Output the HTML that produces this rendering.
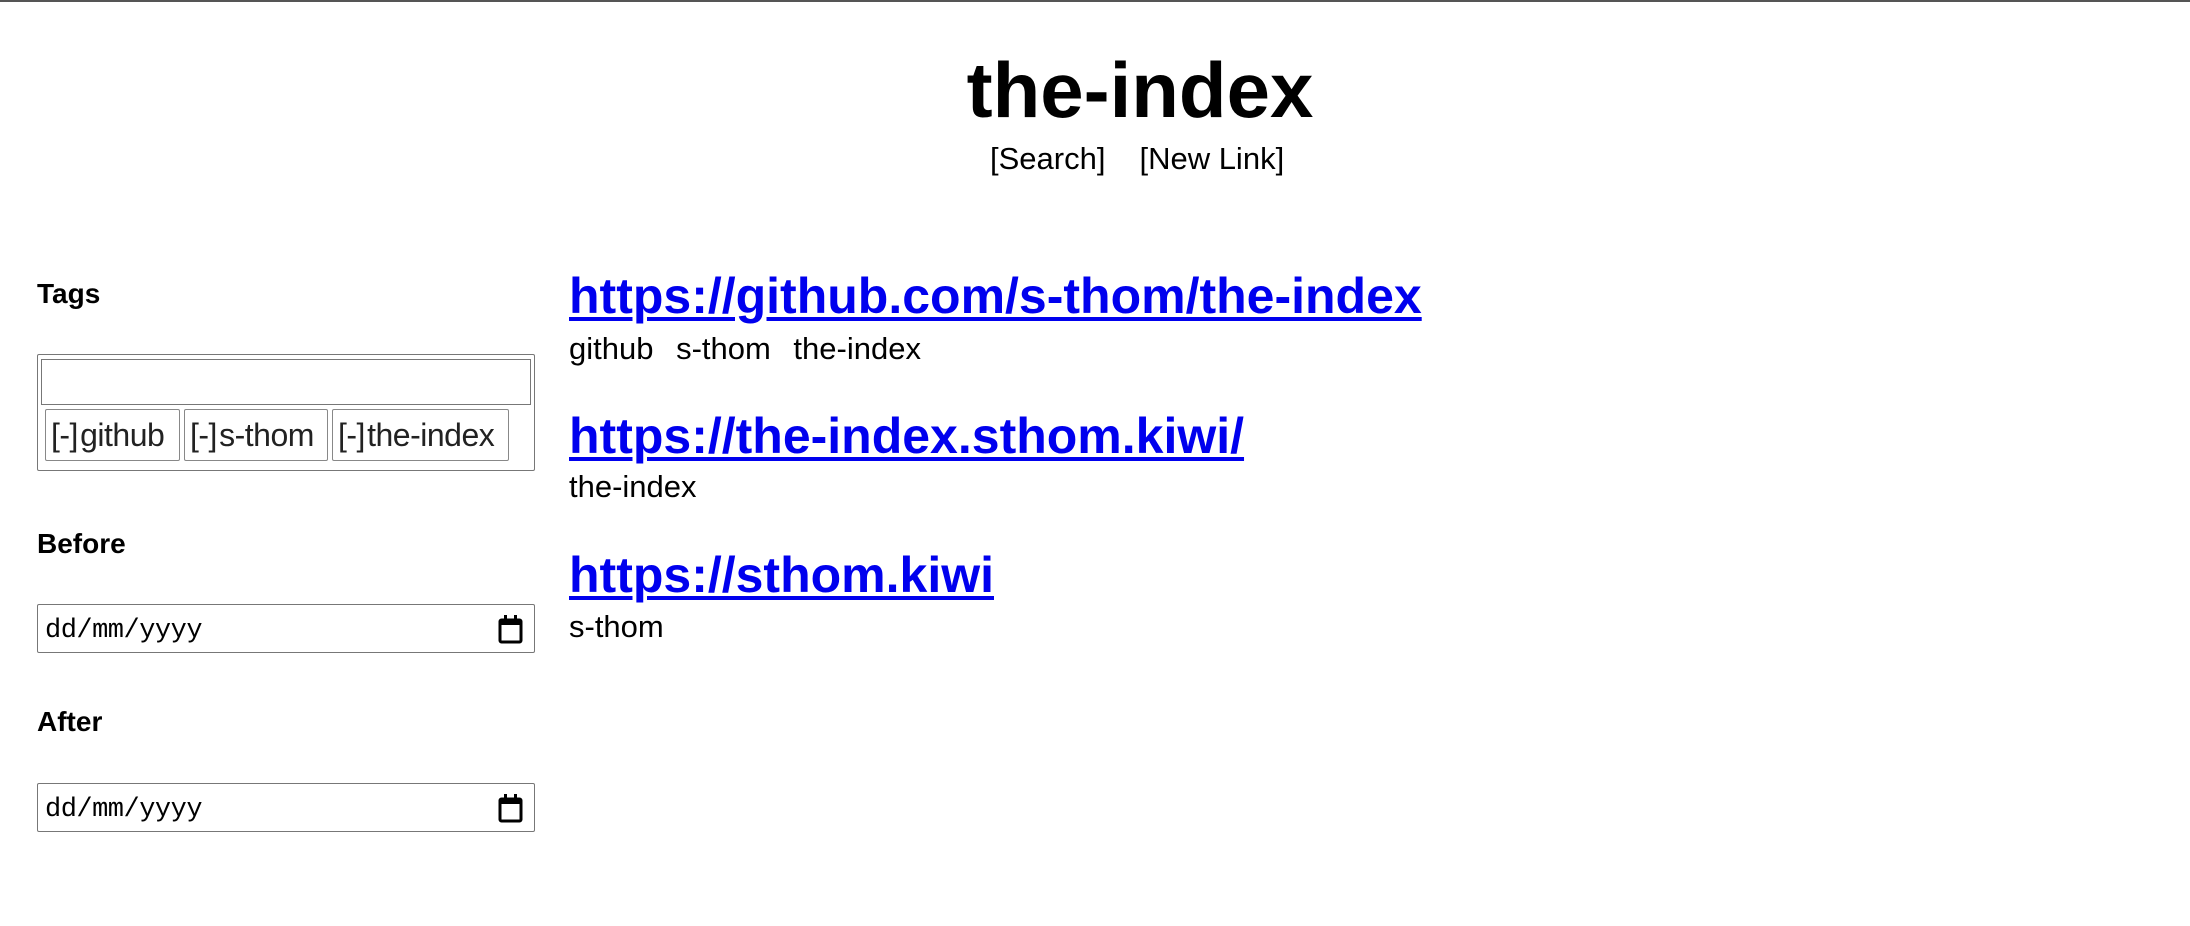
<!DOCTYPE html>
<html><head><meta charset="utf-8"><style>
html,body{margin:0;padding:0;width:2190px;height:926px;background:#fff;overflow:hidden;position:relative;font-family:"Liberation Sans",sans-serif;color:#000}
.a{position:absolute;white-space:nowrap;line-height:1}
.topline{position:absolute;left:0;top:0;width:2190px;height:2px;background:#555}
.lnk{color:#0000ee;font-weight:bold;font-size:50px;text-decoration:underline;text-decoration-thickness:4px;text-underline-offset:4px}
.tg{font-size:31px;word-spacing:14px}
.h{font-weight:bold;font-size:28px}
.box{position:absolute;border:1.5px solid #777;border-radius:2px;box-sizing:border-box}
.btn{position:absolute;top:409px;height:52px;border:1.5px solid #888;border-radius:2px;box-sizing:border-box;font-size:32px;line-height:50px;color:#222;padding-left:5px;white-space:nowrap;letter-spacing:-0.5px}
.date{position:absolute;left:37px;width:498px;height:49px;border:1.5px solid #777;border-radius:2px;box-sizing:border-box}
.date span{position:absolute;left:7px;top:13px;font-family:"Liberation Mono",monospace;font-size:27px;line-height:1;letter-spacing:-0.5px}
.cal{position:absolute;left:459px;top:8px}
</style></head><body>
<div class="topline"></div>
<div class="a" style="left:0;width:2280px;text-align:center;top:51px;font-size:78px;font-weight:bold">the-index</div>
<div class="a" style="left:990px;top:143px;font-size:31px">[Search]<span style="display:inline-block;width:34px"></span>[New Link]</div>

<div class="a h" style="left:37px;top:280px">Tags</div>
<div class="box" style="left:37px;top:354px;width:498px;height:117px"></div>
<div class="box" style="left:41px;top:359px;width:490px;height:46px;border-radius:0"></div>
<div class="btn" style="left:45px;width:135px">[-]&#8202;github</div>
<div class="btn" style="left:184px;width:144px">[-]&#8202;s-thom</div>
<div class="btn" style="left:332px;width:177px">[-]&#8202;the-index</div>

<div class="a h" style="left:37px;top:530px">Before</div>
<div class="date" style="top:604px"><span>dd/mm/yyyy</span><svg class="cal" width="28" height="32" viewBox="0 0 28 32"><rect x="3" y="7" width="21" height="22" rx="1.5" fill="none" stroke="#000" stroke-width="3"/><rect x="3" y="7" width="21" height="5" fill="#000"/><rect x="7" y="2" width="3" height="6" fill="#000"/><rect x="17" y="2" width="3" height="6" fill="#000"/></svg></div>
<div class="a h" style="left:37px;top:708px">After</div>
<div class="date" style="top:783px"><span>dd/mm/yyyy</span><svg class="cal" width="28" height="32" viewBox="0 0 28 32"><rect x="3" y="7" width="21" height="22" rx="1.5" fill="none" stroke="#000" stroke-width="3"/><rect x="3" y="7" width="21" height="5" fill="#000"/><rect x="7" y="2" width="3" height="6" fill="#000"/><rect x="17" y="2" width="3" height="6" fill="#000"/></svg></div>

<a class="a lnk" style="left:569px;top:271px">https://github.com/s-thom/the-index</a>
<div class="a tg" style="left:569px;top:333px">github s-thom the-index</div>
<a class="a lnk" style="left:569px;top:411px">https://the-index.sthom.kiwi/</a>
<div class="a tg" style="left:569px;top:471px">the-index</div>
<a class="a lnk" style="left:569px;top:550px">https://sthom.kiwi</a>
<div class="a tg" style="left:569px;top:611px">s-thom</div>
</body></html>
